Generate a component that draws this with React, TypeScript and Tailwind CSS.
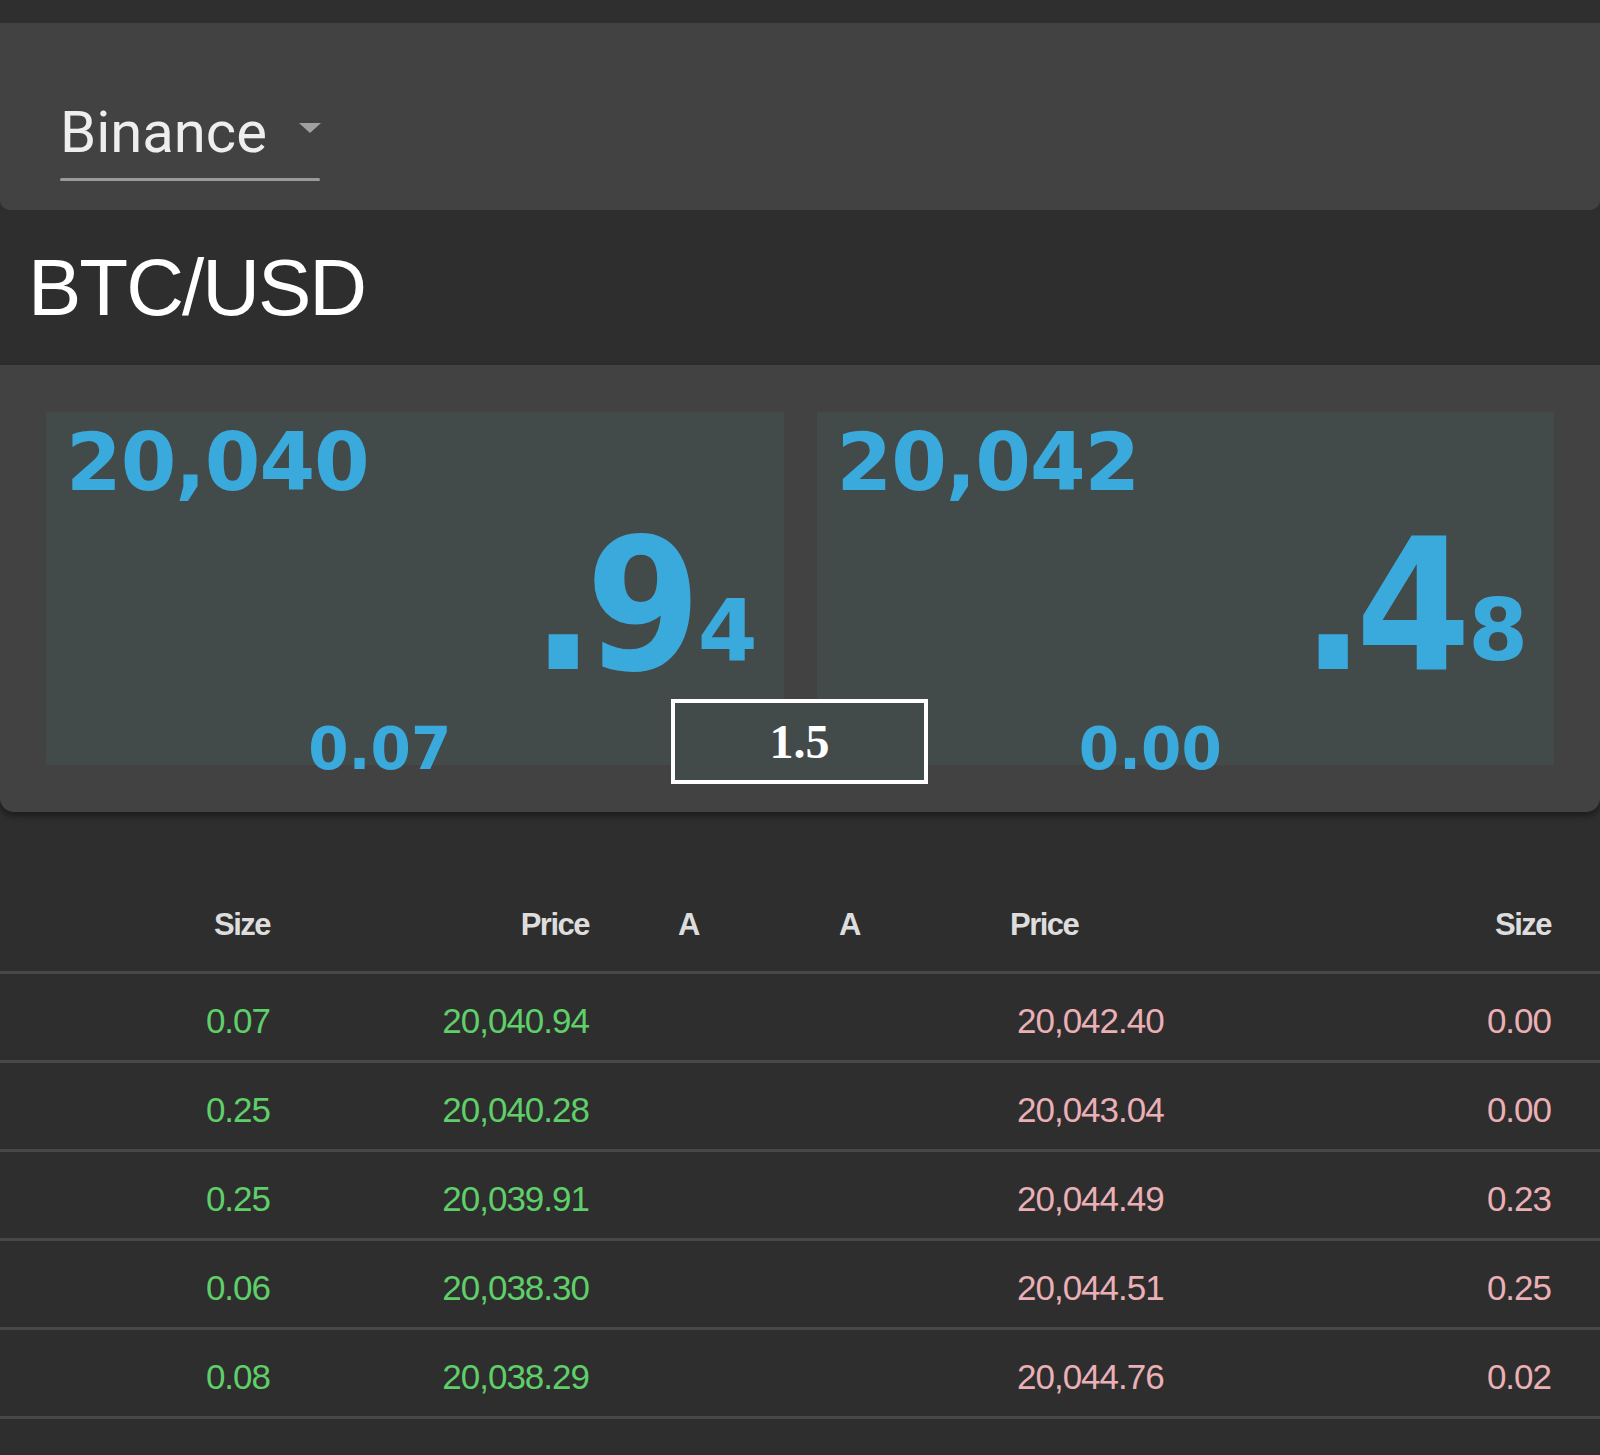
import React from "react";

const bids = [
  ["0.07", "20,040.94"],
  ["0.25", "20,040.28"],
  ["0.25", "20,039.91"],
  ["0.06", "20,038.30"],
  ["0.08", "20,038.29"],
];
const asks = [
  ["20,042.40", "0.00"],
  ["20,043.04", "0.00"],
  ["20,044.49", "0.23"],
  ["20,044.51", "0.25"],
  ["20,044.76", "0.02"],
];

const dv = { fontFamily: "'DejaVu Sans', Verdana, sans-serif" };

function PriceBox({ top, big, sub, size }: { top: string; big: string; sub: string; size: string }) {
  return (
    <div className="flex-1 h-full bg-[#434b4a] flex flex-col">
      <div className="pl-[20px] pt-[8px] text-[#3aa9dc] font-bold text-[80px] leading-[86px] tracking-[-1px]" style={dv}>
        {top}
      </div>
      <div className="flex justify-end items-end pr-[26px] mt-[24px] h-[150px] text-[#3aa9dc] font-bold" style={dv}>
        <span className="text-[184px] leading-[150px] tracking-[-10px] inline-block scale-x-[0.9] origin-right">{big}</span>
        <span className="text-[86px] leading-[80px] ml-[6px] mb-[10px]">{sub}</span>
      </div>
      <div className="flex-1 flex items-center justify-center pr-[70px] pt-[40px] text-[#3aa9dc] font-bold text-[58px] leading-none" style={dv}>
        {size}
      </div>
    </div>
  );
}

export default function App() {
  const f = { fontFamily: "'Liberation Sans', Arial, sans-serif" };
  return (
    <div className="w-[1600px] h-[1455px] bg-[#2e2e2e] overflow-hidden" style={f}>
      <div className="h-[23px] bg-[#2f2f2f]" />
      <div className="h-[187px] bg-[#424242] rounded-b-[10px] pl-[60px] pt-[75px]">
        <div className="inline-flex flex-col">
          <div className="flex items-center h-[68px]">
            <span className="text-[58px] text-[#eeeeee] leading-none" style={{ fontFamily: "Roboto, sans-serif" }}>Binance</span>
            <svg width="22" height="12" viewBox="0 0 22 12" className="ml-[32px] mb-[6px]"><path d="M0 0 L22 0 L11 10 Z" fill="#a0a0a0" /></svg>
          </div>
          <div className="h-[3px] w-[260px] bg-[#9a9a9a] rounded mt-[12px]" />
        </div>
      </div>
      <div className="h-[155px] flex items-center pl-[28px]">
        <span className="text-[80px] text-white leading-none tracking-[-2px]">BTC/USD</span>
      </div>
      <div className="h-[447px] bg-[#424242] rounded-b-[14px] shadow-[0_4px_6px_rgba(0,0,0,0.4)] pt-[47px] px-[46px] relative">
        <div className="flex gap-[33px] h-[353px]">
          <PriceBox top="20,040" big=".9" sub="4" size="0.07" />
          <PriceBox top="20,042" big=".4" sub="8" size="0.00" />
        </div>
        <div className="absolute left-[671px] top-[334px] w-[257px] h-[85px] border-[4px] border-white bg-[#434b4a] flex items-center justify-center">
          <span className="text-white font-bold text-[48px] leading-none" style={{ fontFamily: "'Liberation Serif', serif" }}>1.5</span>
        </div>
      </div>
      <div className="h-[55px]" />
      <div className="h-[107px] border-b-[3px] border-[#484848] text-[#dddddd] text-[31px] font-bold tracking-[-1.5px]">
        <div className="flex items-center h-full pt-[12px]">
          <span className="w-[270px] text-right">Size</span>
          <span className="w-[319px] text-right">Price</span>
          <span className="w-[110px] text-right">A</span>
          <span className="w-[161px] text-right">A</span>
          <span className="ml-[150px]">Price</span>
          <span className="flex-1 text-right pr-[49px]">Size</span>
        </div>
      </div>
      {bids.map((b, i) => (
        <div key={i} className="flex items-center h-[89px] pt-[8px] border-b-[3px] border-[#484848] text-[35px] tracking-[-1px]">
          <span className="w-[270px] text-right text-[#5fcf6a]">{b[0]}</span>
          <span className="w-[319px] text-right text-[#5fcf6a]">{b[1]}</span>
          <span className="ml-[428px] text-[#eab0b6]">{asks[i][0]}</span>
          <span className="flex-1 text-right pr-[49px] text-[#eab0b6]">{asks[i][1]}</span>
        </div>
      ))}
    </div>
  );
}
